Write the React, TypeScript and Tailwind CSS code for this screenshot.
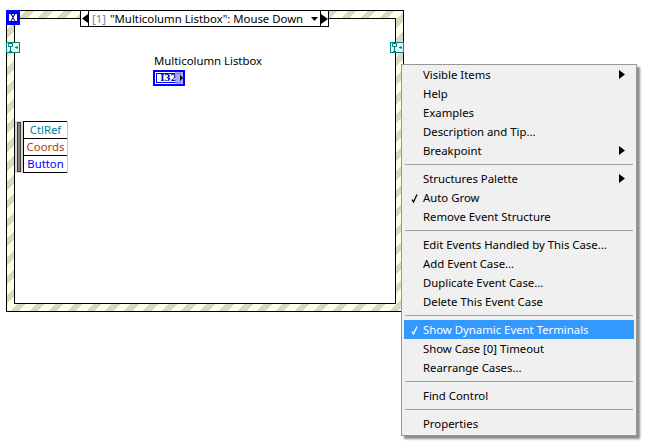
type Item = { label: string; sub?: boolean; check?: boolean; active?: boolean };

const groups: Item[][] = [
  [
    { label: "Visible Items", sub: true },
    { label: "Help" },
    { label: "Examples" },
    { label: "Description and Tip..." },
    { label: "Breakpoint", sub: true },
  ],
  [
    { label: "Structures Palette", sub: true },
    { label: "Auto Grow", check: true },
    { label: "Remove Event Structure" },
  ],
  [
    { label: "Edit Events Handled by This Case..." },
    { label: "Add Event Case..." },
    { label: "Duplicate Event Case..." },
    { label: "Delete This Event Case" },
  ],
  [
    { label: "Show Dynamic Event Terminals", check: true, active: true },
    { label: "Show Case [0] Timeout" },
    { label: "Rearrange Cases..." },
  ],
  [{ label: "Find Control" }],
  [{ label: "Properties" }],
];

function Tunnel({ className }: { className: string }) {
  return (
    <div className={`absolute w-[14px] h-[11px] border border-[#007f7f] bg-[#e4f6f0] ${className}`}>
      <svg width="12" height="9" viewBox="0 0 12 9" className="block" fill="none" stroke="#007f7f" strokeWidth="1">
        <path d="M1.500 .500h4v3h-4zM3.500 3.500v5M2 8.500h3M8 4.500h3M10 3v3" />
      </svg>
    </div>
  );
}

function MenuRow({ item }: { item: Item }) {
  return (
    <div
      className={`relative flex h-[19px] items-center pl-[19px] pr-[9px] ${
        item.active ? "bg-[#3399ff] text-white" : "text-black"
      }`}
    >
      {item.check && (
        <svg width="7" height="9" viewBox="0 0 7 9" className="absolute left-[7px] top-[6px]" fill="none" stroke="currentColor" strokeWidth="1.3">
          <path d="M1 5.500 2.500 8 6 .500" />
        </svg>
      )}
      <span className="flex-1 whitespace-nowrap">{item.label}</span>
      {item.sub && (
        <svg width="6" height="9" viewBox="0 0 6 9">
          <path d="M0 0 6 4.500 0 9z" fill="#000" />
        </svg>
      )}
    </div>
  );
}

export default function App() {
  return (
    <div className="relative w-[648px] h-[448px] overflow-hidden bg-white pt-[10px] pl-[6px] font-['Noto_Sans',sans-serif] text-[11.35px] leading-none text-black">
      {/* Event structure frame */}
      <div className="relative w-[398px] h-[302px] border border-black p-[7px] bg-[repeating-linear-gradient(135deg,#d9d9c3_0,#d9d9c3_6px,#ffffe8_6px,#ffffe8_13.4px)]">
        <div className="h-full w-full border border-black bg-white" />

        {/* Hourglass */}
        <div className="absolute left-[-1px] top-[-1px] w-[14px] h-[15px] border-[3px] border-[#0000ff] bg-white">
          <svg width="8" height="9" viewBox="0 0 8 9" className="block">
            <path d="M0 0h8v1H6.500L4.500 4.500 6.500 8H8v1H0V8h1.500l2-3.500-2-3.500H0z" fill="#000080" />
            <path d="M2.800 1h2.400L4 3.300z" fill="#ffffff" />
            <path d="M2.500 8 4 5.500 5.500 8z" fill="#ffffff" />
          </svg>
        </div>

        {/* Case selector */}
        <div className="absolute left-[73px] top-[-1px] flex h-[17px] w-[249px] items-stretch border border-black bg-white">
          <div className="flex w-[8px] items-center justify-center border-r border-black">
            <svg width="6" height="9" viewBox="0 0 6 9">
              <path d="M6 0 0 4.500 6 9z" fill="#000" />
            </svg>
          </div>
          <div className="flex flex-1 items-center whitespace-nowrap pl-[3px]">
            <span className="text-[#7f7f9f]">[1]</span>
            <span className="ml-[4px]">"Multicolumn Listbox": Mouse Down</span>
          </div>
          <div className="flex w-[9px] items-center justify-start">
            <svg width="7" height="4" viewBox="0 0 7 4">
              <path d="M0 0h7L3.500 4z" fill="#000" />
            </svg>
          </div>
          <div className="flex w-[8px] items-center justify-start border-l border-black">
            <svg width="7" height="10" viewBox="0 0 7 10">
              <path d="M0 0 7 5 0 10z" fill="#000" />
            </svg>
          </div>
        </div>

        <Tunnel className="left-[-1px] top-[31px]" />
        <Tunnel className="left-[383px] top-[31px]" />

        {/* Listbox terminal */}
        <div className="absolute left-[147px] top-[44px] whitespace-nowrap">Multicolumn Listbox</div>
        <div className="absolute left-[146px] top-[59px] flex h-[16px] w-[32px] items-center border-2 border-[#0000ff] bg-white pl-[1px]">
          <div className="flex h-[10px] w-[25px] items-center justify-center border border-[#0000ff] font-['DejaVu_Serif',serif] text-[9px] font-bold text-[#0000c0]">
            I32
          </div>
          <div className="absolute right-0 top-0 flex h-full w-[8px] items-center justify-end bg-[#9999ff]/80">
            <svg width="3" height="6" viewBox="0 0 3 6">
              <path d="M0 0 3 3 0 6z" fill="#000" />
            </svg>
          </div>
        </div>

        {/* Event data node */}
        <div className="absolute left-[8px] top-[110px] flex w-[53px] border-r border-[#c8c8b8]">
          <div className="flex w-[8px] justify-center bg-[#d8d8c8]">
            <div className="my-[1px] w-[4px] border border-[#404040] bg-[#808080]" />
          </div>
          <div className="flex-1 border-y border-black bg-white text-center">
            <div className="flex h-[16px] items-center justify-center border-l border-black text-[#007f9f]">CtlRef</div>
            <div className="flex h-[18px] items-center justify-center border-y border-l border-black text-[#b04000]">Coords</div>
            <div className="flex h-[16px] items-center justify-center border-l border-black text-[#0000ff]">Button</div>
          </div>
        </div>
      </div>

      {/* Context menu */}
      <div className="absolute left-[401px] top-[64px] w-[236px] border border-[#979797] bg-[#f0f0f0] px-[2px] pb-[2px] shadow-[3px_3px_2px_rgba(0,0,0,0.45)]">
        {groups.map((group, i) => (
          <div key={i}>
            {i > 0 && <div className="mx-[1px] mt-[4px] mb-[3px] h-[2px] border-t border-[#a0a0a0]" />}
            {group.map((item) => (
              <MenuRow key={item.label} item={item} />
            ))}
          </div>
        ))}
      </div>
    </div>
  );
}
